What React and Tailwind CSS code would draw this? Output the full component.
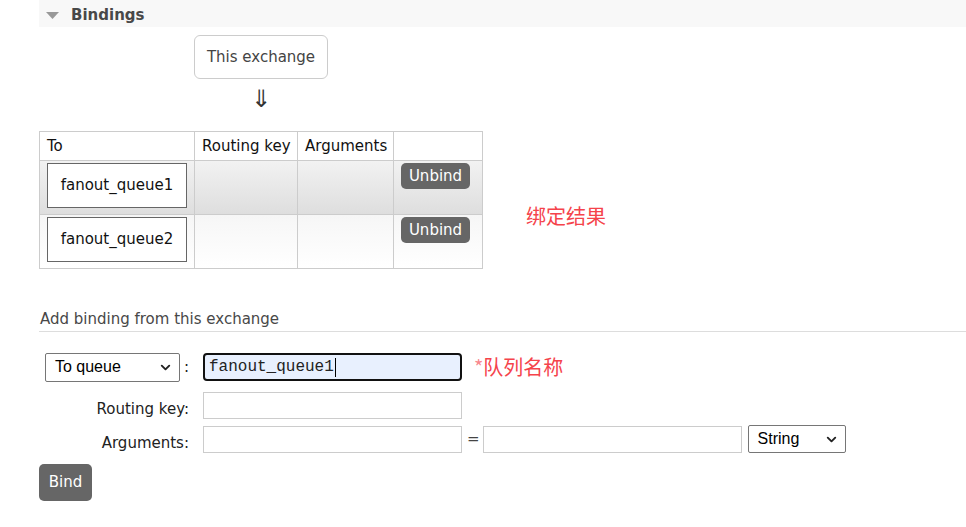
import React from "react";
import { ChevronDown } from "lucide-react";

const FONT = { fontFamily: '"DejaVu Sans", Verdana, "Noto Sans CJK SC", sans-serif' };

const BINDINGS = ["fanout_queue1", "fanout_queue2"];

function FakeSelect({ label, className }) {
  return (
    <div
      className={`flex items-center justify-between rounded-[2px] border border-[#767676] bg-white pl-[9px] pr-[6px] text-[16px] text-black ${className}`}
      style={{ fontFamily: '"Liberation Sans", Arial, sans-serif' }}
    >
      <span>{label}</span>
      <ChevronDown size={15} strokeWidth={3} className="text-[#222]" />
    </div>
  );
}

function BindingsTable() {
  return (
    <div className="grid w-[444px] grid-cols-[155px_103px_96px_89px] border-l border-t border-[#ccc] text-[15px] text-[#111]">
      {/* header */}
      <div className="flex h-[29px] items-center border-b border-r border-[#ccc] bg-white pl-[7px] pt-[1px]">To</div>
      <div className="flex h-[29px] items-center border-b border-r border-[#ccc] bg-white pl-[7px] pt-[1px]">Routing key</div>
      <div className="flex h-[29px] items-center border-b border-r border-[#ccc] bg-white pl-[7px] pt-[1px]">Arguments</div>
      <div className="h-[29px] border-b border-r border-[#ccc] bg-white" />

      {BINDINGS.map((name, i) => {
        const bg = i === 0 ? "bg-gradient-to-b from-[#f2f2f2] to-[#dedede]" : "bg-gradient-to-b from-[#f6f6f6] to-white";
        return (
          <React.Fragment key={name}>
            <div className={`h-[54px] border-b border-r border-[#ccc] pl-[7px] pt-[2px] ${bg}`}>
              <div className="flex h-[45px] w-[140px] items-center justify-center border border-[#666] bg-white">
                {name}
              </div>
            </div>
            <div className={`h-[54px] border-b border-r border-[#ccc] ${bg}`} />
            <div className={`h-[54px] border-b border-r border-[#ccc] ${bg}`} />
            <div className={`h-[54px] border-b border-r border-[#ccc] pl-[7px] pt-[2px] ${bg}`}>
              <div className="flex h-[26px] w-[69px] items-center justify-center rounded-[5px] bg-[#666] pt-[1px] text-white">
                Unbind
              </div>
            </div>
          </React.Fragment>
        );
      })}
    </div>
  );
}

export default function App() {
  return (
    <div className="min-h-[527px] bg-white pl-[39px]" style={FONT}>
      {/* Section header */}
      <div className="flex h-[27px] items-center gap-[12px] bg-[#f8f8f8] pl-[7px] pt-[3px] text-[15px] font-bold text-[#484848]">
        <svg width="13" height="7" viewBox="0 0 13 7">
          <path d="M0 0 L13 0 L6.5 7 Z" fill="#999" />
        </svg>
        <span>Bindings</span>
      </div>

      {/* Source box + arrow */}
      <div className="ml-[155px] mt-[8px] w-[134px]">
        <div className="flex h-[44px] items-center justify-center rounded-[6px] border border-[#ccc] pt-[1px] text-[15px] text-[#444]">
          This exchange
        </div>
        <div className="mt-[5px] flex h-[30px] items-center justify-center text-[24px] leading-[30px] text-[#333]">
          ⇓
        </div>
      </div>

      {/* Table + note */}
      <div className="mt-[17px] flex items-start">
        <BindingsTable />
        <div className="ml-[43px] mt-[70px] text-[20px] text-[#f5434b]" style={{ fontFamily: '"Noto Sans CJK SC", sans-serif' }}>
          绑定结果
        </div>
      </div>

      {/* Add binding */}
      <div className="mt-[40px] border-b border-[#ddd] pb-[2px] pl-[1px] text-[15px] leading-[20px] text-[#484848]">
        Add binding from this exchange
      </div>

      <div className="mt-[20px] grid grid-cols-[150px_auto] items-center gap-x-[14px] text-[15px] text-[#222]">
        <div className="flex items-center justify-end">
          <FakeSelect label="To queue" className="h-[29px] w-[135px]" />
          <span className="ml-[4px]">:</span>
        </div>
        <div className="flex items-center">
          <div
            className="flex h-[28px] w-[259px] items-center rounded-[4px] border-2 border-[#111] bg-[#e8f0fe] pl-[4px] text-[16px] text-[#222]"
            style={{ fontFamily: '"Liberation Mono", "Courier New", monospace' }}
          >
            fanout_queue1
            <span className="ml-[1px] inline-block h-[19px] w-[1px] bg-black" />
          </div>
          <span className="ml-[12px] text-[20px] text-[#f5434b]" style={{ fontFamily: '"Noto Sans CJK SC", sans-serif' }}>
            <span className="text-[#f8888e]">*</span>队列名称
          </span>
        </div>

        <div className="mt-[10px] translate-y-[4px] text-right">Routing key:</div>
        <div className="mt-[10px]">
          <div className="h-[27px] w-[259px] border border-[#ccc] bg-white" />
        </div>

        <div className="mt-[6px] translate-y-[4px] text-right">Arguments:</div>
        <div className="mt-[6px] flex items-center">
          <div className="h-[27px] w-[259px] border border-[#ccc] bg-white" />
          <span className="ml-[5px] mr-[3px] text-[#444]">=</span>
          <div className="h-[27px] w-[259px] border border-[#ccc] bg-white" />
          <FakeSelect label="String" className="ml-[6px] h-[28px] w-[98px]" />
        </div>
      </div>

      <div className="mt-[11px] flex h-[37px] w-[53px] items-center justify-center rounded-[5px] bg-[#666] text-[15px] text-white">
        Bind
      </div>
    </div>
  );
}
